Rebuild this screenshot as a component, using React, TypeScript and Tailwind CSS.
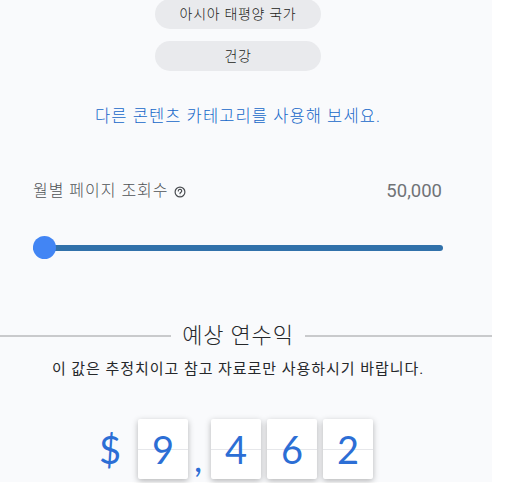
import React from 'react';

const FONT = "font-['Roboto','Noto_Sans_CJK_KR',sans-serif]";

const Pill = ({ label }: { label: string }) => (
  <div className="flex h-[30px] w-[166px] items-center justify-center rounded-full bg-[#e9eaed] text-[14px] font-light tracking-[0.7px] text-[#1c1d20]">{label}</div>
);

const HelpIcon = () => (
  <svg width="12" height="12" viewBox="0 0 12 12" fill="none" stroke="#4a4d51" strokeWidth="1.2" className="ml-[5px] mt-[2px]">
    <circle cx="6" cy="6" r="4.9" />
    <path d="M4.3 4.9a1.7 1.6 0 1 1 2.6 1.4c-.6.4-.9.6-.9 1.2" strokeLinecap="round" />
    <circle cx="6" cy="9" r=".4" fill="#4a4d51" stroke="none" />
  </svg>
);

const Digit = ({ value }: { value: string }) => (
  <div className="relative flex h-[60px] w-[50px] items-center justify-center rounded-[2px] bg-white font-['Lato',sans-serif] text-[38px] text-[#2c6ed5] shadow-[0_2px_6px_rgba(0,0,0,0.28)]">
    <div className="absolute inset-x-0 top-[30px] h-px bg-[#e6e7ea]" />
    <span className="relative">{value}</span>
  </div>
);

export default function App() {
  return (
    <div className={`h-[483px] overflow-hidden bg-white ${FONT}`}>
      <div className="h-full w-[492px] bg-[#f9fafc]">
        <div className="-mt-px flex flex-col items-center gap-3 pr-[16px]">
          <Pill label="아시아 태평양 국가" />
          <Pill label="건강" />
        </div>

        <p className="mt-[36px] pr-[16px] text-center text-[16.5px] font-light leading-5 tracking-[1.1px] text-[#1567c9]">다른 콘텐츠 카테고리를 사용해 보세요.</p>

        <div className="mt-[54px] flex items-center justify-between pl-[33px] pr-[50px]">
          <div className="flex items-center text-[16px] font-light leading-5 tracking-[1px] text-[#4f5256]">
            월별 페이지 조회수
            <HelpIcon />
          </div>
          <div className="text-[18.5px] leading-5 text-[#707377]">50,000</div>
        </div>

        <div className="relative ml-[33px] mt-[35px] flex h-[23px] w-[410px] items-center">
          <div className="h-[6px] w-full rounded-full bg-[#3171aa]" />
          <div className="absolute left-0 top-0 size-[23px] rounded-full bg-[#4285f4]" />
        </div>

        <div className="mt-[63px] flex items-center justify-between">
          <div className="h-0 w-[171px] border-t-2 border-[#c9cacc]" />
          <div className="text-[22px] font-light leading-7 tracking-[0.8px] text-[#26282b]">예상 연수익</div>
          <div className="h-0 w-[187px] border-t-2 border-[#c9cacc]" />
        </div>

        <p className="mt-[9px] pr-[16px] text-center text-[15px] leading-5 tracking-[0.95px] text-[#26282b]">이 값은 추정치이고 참고 자료로만 사용하시기 바랍니다.</p>

        <div className="mt-[40px] flex pl-[99px]">
          <div className="flex h-[60px] w-[39px] items-center font-['Lato',sans-serif] text-[38px] text-[#2c6ed5]">$</div>
          <Digit value="9" />
          <div className="flex h-[60px] w-[23px] items-end justify-start pb-[1px] pl-[6px] font-['Lato',sans-serif] text-[36px] leading-[40px] text-[#2c6ed5]">,</div>
          <div className="flex gap-[6px]">
            <Digit value="4" />
            <Digit value="6" />
            <Digit value="2" />
          </div>
        </div>
      </div>
    </div>
  );
}
